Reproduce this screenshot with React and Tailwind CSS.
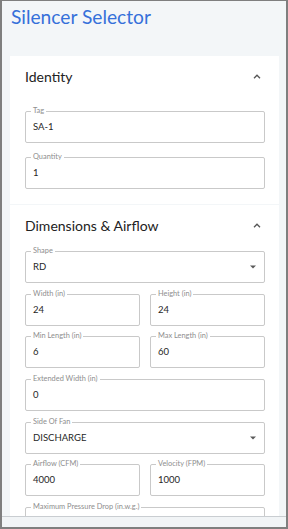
import React from "react";

const Field = ({ label, value, select }) => (
  <div className="relative h-[32px] border border-[#c9c9c9] rounded-[2px] flex items-center justify-between pl-[7px] pr-[8px]">
    <span className="absolute left-[5px] top-[-5px] px-[2px] bg-white text-[7.4px] leading-[8px] text-[#8e8e8e]">
      {label}
    </span>
    <span className="text-[9.5px] text-[#262626]">{value}</span>
    {select && (
      <svg width="6" height="4" viewBox="0 0 6 4">
        <path d="M0 0.5 L6 0.5 L3 3.5 Z" fill="#5a5a5a" />
      </svg>
    )}
  </div>
);

const Chevron = () => (
  <svg width="8" height="5" viewBox="0 0 8 5">
    <polyline
      points="1,4.2 4,1.2 7,4.2"
      fill="none"
      stroke="#555"
      strokeWidth="1.3"
    />
  </svg>
);

const Section = ({ title, children, className }) => (
  <div className="bg-white">
    <div className="h-[40px] flex items-center justify-between pl-[15px] pr-[18px]">
      <h2 className="text-[14px] text-[#222]">{title}</h2>
      <Chevron />
    </div>
    <div className={className}>{children}</div>
  </div>
);

export default function App() {
  return (
    <div
      className="w-[288px] h-[529px] flex flex-col border-x-2 border-b-2 border-t border-[#7f7f7f] bg-[#f3f6f8] overflow-hidden"
      style={{ fontFamily: "Lato, 'Noto Sans', sans-serif" }}
    >
      <div className="flex-1 min-h-0 overflow-hidden pl-[8px] pr-[7px]">
        <h1 className="pt-[4px] pl-[1px] text-[19.2px] leading-[24px] text-[#3570da]">
          Silencer Selector
        </h1>
        <div className="mt-[27px] flex flex-col gap-[1px]">
          <Section title="Identity" className="pt-[15px] pb-[15px] pl-[15px] pr-[14px] flex flex-col gap-[14px]">
            <Field label="Tag" value="SA-1" />
            <Field label="Quantity" value="1" />
          </Section>
          <Section title="Dimensions & Airflow" className="pt-[6px] pb-[15px] pl-[15px] pr-[14px] flex flex-col gap-[10.67px]">
            <Field label="Shape" value="RD" select />
            <div className="grid grid-cols-2 gap-x-[10px]">
              <Field label="Width (in)" value="24" />
              <Field label="Height (in)" value="24" />
            </div>
            <div className="grid grid-cols-2 gap-x-[10px]">
              <Field label="Min Length (in)" value="6" />
              <Field label="Max Length (in)" value="60" />
            </div>
            <Field label="Extended Width (in)" value="0" />
            <Field label="Side Of Fan" value="DISCHARGE" select />
            <div className="grid grid-cols-2 gap-x-[10px]">
              <Field label="Airflow (CFM)" value="4000" />
              <Field label="Velocity (FPM)" value="1000" />
            </div>
            <Field label="Maximum Pressure Drop (in.w.g.)" value="" />
          </Section>
        </div>
      </div>
      <div className="h-[11px] shrink-0 border-t border-[#c9cdd1] bg-[#f1f4f6]" />
    </div>
  );
}
